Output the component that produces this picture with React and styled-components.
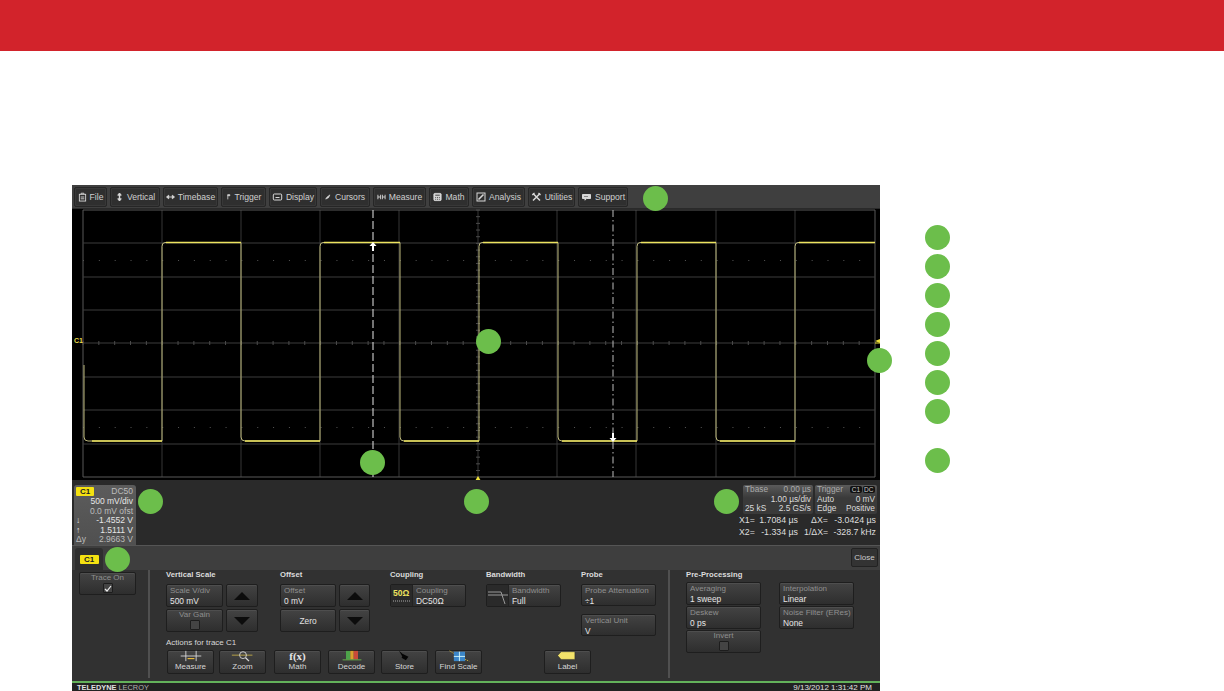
import React from "react";
import styled, { createGlobalStyle, css } from "styled-components";

const Global = createGlobalStyle`
  html, body { margin: 0; padding: 0; background: #fff; overflow: hidden; }
  * { box-sizing: border-box; }
`;
const Page = styled.div`width: 1224px; height: 691px; overflow: hidden; font-family: "Liberation Sans", Arial, sans-serif;`;
const Banner = styled.header`height: 51px; background: #d2232b;`;
const Main = styled.main`display: flex; padding: 134px 0 0 72px; height: 640px;`;
const Panel = styled.section`position: relative; width: 808px; height: 506px; background: #2c2c2c; display: flex; flex-direction: column; flex: none;`;
const Toolbar = styled.nav`height: 24px; flex: none; background: #3f3f3f; display: flex; gap: 3px; padding: 2px 0 0 2px; border-bottom: 1px solid #2a2a2a;`;
const ToolBtn = styled.div`
  width: ${p => p.$w}px; height: 20px; display: flex; align-items: center; justify-content: center; gap: 3px;
  background: #2f2f2f; border: 1px solid #262626; border-radius: 2px; color: #cfcfcf; font-size: 8.6px; white-space: nowrap;
  box-shadow: inset 0 0 0 1px #383838;
`;
const Plot = styled.svg`display: block; width: 808px; height: 271px; flex: none; background: #000;`;
const InfoStrip = styled.div`height: 65px; flex: none; background: #2a2a2a; display: flex; justify-content: space-between; padding: 5px 3px 0 2px;`;
const TraceBox = styled.div`width: 62px; height: 60px; background: linear-gradient(#5c5c5c, #505050); border-radius: 3px 3px 0 0; padding: 2px 3px 0 2px; color: #e6e6e6; font-size: 8.5px; line-height: 9.6px;`;
const TraceRow = styled.div`display: flex; justify-content: space-between; white-space: nowrap; color: ${p => p.$dim ? "#bcbcbc" : "#e6e6e6"}; height: ${p => p.$h || 9.6}px;`;
const Tag = styled.span`display: inline-block; width: ${p => p.$w || 18}px; height: ${p => p.$h || 9}px; line-height: ${p => p.$h || 9}px; background: #f5e211; color: #222; font-size: 8px; font-weight: 700; text-align: center; border-radius: 1px;`;
const Readouts = styled.div`width: 134px; display: flex; flex-direction: column;`;
const ReadoutBoxes = styled.div`display: flex; gap: 2px; height: 29px;`;
const ReadoutBox = styled.div`width: ${p => p.$w}px; background: linear-gradient(#5a5a5a, #3a3a3a 45%, #3a3a3a); border-radius: 2px; padding: 0 2px; color: #d8d8d8; font-size: 8.3px; line-height: 9.6px;`;
const ReadoutRow = styled.div`display: flex; justify-content: space-between; white-space: nowrap; color: ${p => p.$dim ? "#a9a9a9" : "#dcdcdc"};`;
const Pill = styled.span`background: #111; color: #ccc; font-size: 6.5px; padding: 0 1.5px; border-radius: 2px; margin-left: 1px;`;
const Measures = styled.div`display: grid; grid-template-columns: 14px 45px 6px 24px 48px; margin-left: -4px; padding-top: 1px; color: #dedede; font-size: 8.8px; line-height: 11.5px; white-space: nowrap; width: 137px;`;
const Num = styled.span`text-align: right;`;
const TabStrip = styled.div`height: 25px; flex: none; background: #3e3e3e; border-top: 1px solid #555; display: flex; justify-content: space-between; align-items: flex-start; padding: 2px 2px 0 3px;`;
const Tab = styled.div`width: 28px; height: 22px; background: #2f2f2f; border-radius: 3px 3px 0 0; display: flex; justify-content: center; padding-top: 7px;`;
const CloseBtn = styled.div`width: 27px; height: 19px; background: #333; border: 1px solid #222; border-radius: 2px; color: #ccc; font-size: 8px; line-height: 17px; text-align: center;`;
const Dialog = styled.div`height: 111px; flex: none; background: #313131; display: flex; padding: 0 0 0 7px; color: #e4e4e4; font-size: 8px;`;
const SideCol = styled.div`width: 69px; flex: none; padding-top: 2px;`;
const TraceOnWrap = styled.div`width: 57px;`;
const Separator = styled.div`width: 2px; height: 108px; background: #505050; flex: none;`;
const CenterCol = styled.div`width: 518px; flex: none; padding: 0 0 0 16px; display: flex; flex-direction: column;`;
const GroupRow = styled.div`display: flex; height: 66px;`;
const Group = styled.div`width: ${p => p.$w}px; margin-right: ${p => p.$gap || 0}px; flex: none; display: flex; flex-direction: column;`;
const GroupTitle = styled.div`font-size: 7.7px; font-weight: 700; color: #dcdcdc; height: 10px; line-height: 10px; margin-bottom: ${p => p.$mb ?? 4}px; white-space: nowrap;`;
const BtnGrid = styled.div`display: grid; grid-template-columns: ${p => p.$cols}; grid-auto-rows: 23px; gap: ${p => p.$gap || "2px 3px"};`;
const btnBase = css`
  background: linear-gradient(#434343, #2e2e2e); border: 1px solid #1e1e1e; border-radius: 2px; box-shadow: inset 0 1px 0 #4e4e4e;
`;
const ValueBtn = styled.div`${btnBase}; height: ${p => p.$h || 23}px; padding: 1px 3px; display: flex; flex-direction: column; white-space: nowrap; overflow: hidden; margin-bottom: ${p => p.$mb || 0}px;`;
const BtnLabel = styled.span`color: #8f8f8f; font-size: 8px; line-height: 10px;`;
const BtnValue = styled.span`color: #e6e6e6; font-size: 8.4px; line-height: 10px;`;
const CheckBtn = styled.div`${btnBase}; height: ${p => p.$h || 23}px; display: flex; flex-direction: column; align-items: center; color: #8f8f8f; font-size: 8px; line-height: 10px;`;
const Box = styled.div`width: 10px; height: 10px; border: 1px solid #1d1d1d; background: #444; border-radius: 1px; display: flex; align-items: center; justify-content: center;`;
const ArrowBtn = styled.div`${btnBase}; display: flex; align-items: center; justify-content: center;`;
const Arrow = styled.div`width: 0; height: 0; border-left: 8px solid transparent; border-right: 8px solid transparent; ${p => p.$down ? "border-top: 8px solid #0c0c0c;" : "border-bottom: 8px solid #0c0c0c;"}`;
const PlainBtn = styled.div`${btnBase}; display: flex; align-items: center; justify-content: center; color: #e0e0e0; font-size: 8.4px;`;
const IconValueBtn = styled.div`${btnBase}; height: 23px; display: flex; align-items: stretch;`;
const IconCell = styled.div`width: 22px; flex: none; border-right: 1px solid #222; background: #2a2a2a; display: flex; align-items: center; justify-content: center;`;
const IconText = styled.div`padding: 1px 3px 0 3px; display: flex; flex-direction: column; white-space: nowrap;`;
const ActionsTitle = styled.div`font-size: 8px; color: #d8d8d8; height: 12px; line-height: 12px; margin-top: 1px; margin-bottom: 1px;`;
const ActionRow = styled.div`display: flex;`;
const ActionBtn = styled.div`
  ${btnBase}; width: 47px; height: 24px; margin-left: ${p => p.$ml || 0}px; flex: none; display: flex; flex-direction: column; align-items: center; justify-content: flex-end;
  color: #d6d6d6; font-size: 8px; line-height: 10px; white-space: nowrap; padding-bottom: 1px;
`;
const ActionIcon = styled.svg`display: block; width: 30px; height: 12px; flex: none;`;
const PreCol = styled.div`padding: 0 0 0 16px;`;
const PreGrid = styled.div`display: grid; grid-template-columns: 75px 75px; column-gap: 18px; row-gap: 1px; grid-auto-rows: 23px;`;
const Footer = styled.footer`height: 10px; flex: none; border-top: 2px solid #63b15a; background: #222; display: flex; justify-content: space-between; padding: 0 8px 0 5px; color: #e0e0e0; font-size: 8px; line-height: 9px; white-space: nowrap;`;
const Brand = styled.span`font-size: 7.4px; b { font-weight: 700; } span { color: #b0b0b0; }`;
const Callout = styled.div`position: absolute; left: ${p => p.$x - 72 - 12.5}px; top: ${p => p.$y - 185 - 12.5}px; width: 25px; height: 25px; border-radius: 50%; background: #6cbe4b;`;
const Legend = styled.ul`list-style: none; margin: 40px 0 0 45px; padding: 0; display: flex; flex-direction: column; gap: 4px;`;
const LegendDot = styled.li`width: 25px; height: 25px; border-radius: 50%; background: #6cbe4b; margin-top: ${p => p.$mt || 0}px;`;

const Ic = ({ children, w = 9 }) => <svg width={w} height="10" viewBox="0 0 10 10" fill="none" stroke="#d8d8d8" strokeWidth="1">{children}</svg>;
const toolItems = [
  ["File", 33, <Ic><rect x="1.5" y="2" width="7" height="7.5" /><path d="M3.5 2V.8h3V2M3 5h4M3 7h4" /></Ic>],
  ["Vertical", 50, <Ic><path d="M5 1v8" strokeWidth="1.6" /><path d="M3 3l2-2.4L7 3zM3 7l2 2.4L7 7z" fill="#d8d8d8" /></Ic>],
  ["Timebase", 55, <Ic><path d="M1 5h8" /><path d="M3 3L.6 5 3 7zM7 3l2.4 2L7 7z" fill="#d8d8d8" /></Ic>],
  ["Trigger", 45, <Ic w={6}><path d="M3 1v8" strokeWidth="1.3" /><path d="M3 1h3.5v2H3z" fill="#d8d8d8" /></Ic>],
  ["Display", 48, <Ic w={11}><rect x=".8" y="2" width="8.4" height="6" rx="1" /><path d="M3 5.5h4" /></Ic>],
  ["Cursors", 50, <Ic w={7}><path d="M1 8l2-3 4-3-2 4z" fill="#d8d8d8" /></Ic>],
  ["Measure", 53, <Ic><path d="M1 2.5v5M4 2.5v5M6 2.5v5M9 2.5v5M1 5h3M6 5h3" /></Ic>],
  ["Math", 40, <Ic><rect x="1" y="1" width="8" height="8" rx="1" fill="#d8d8d8" /><path d="M2.5 3h5" stroke="#333" /><path d="M2.5 5.5h5M2.5 7.5h5" stroke="#333" strokeDasharray="1 1" /></Ic>],
  ["Analysis", 53, <Ic w={10}><rect x="1" y="1" width="8" height="8" /><path d="M2.5 7.5L7.5 2.5" strokeWidth="1.6" /></Ic>],
  ["Utilities", 47, <Ic w={11}><path d="M1.5 1.5l7 7M8.5 1.5l-7 7" strokeWidth="1.5" /><path d="M.8 3L3 .8M7 1l2 2" strokeWidth="1.2" /></Ic>],
  ["Support", 50, <Ic w={11}><path d="M1 2.5h8v4H5L3.5 8.2V6.5H1z" fill="#d8d8d8" /><path d="M3 4.5h4" stroke="#333" strokeDasharray="1 1" /></Ic>],
];

const vLines = [83, 162, 241, 320, 399, 478, 557, 636, 716, 795, 875];
const hLines = [210, 243, 277, 310, 343, 377, 410, 444, 477];
const edges = [162, 241, 320, 400, 479, 558, 637, 716, 795];
const HI = 242.5, LO = 441;
function tracePath() {
  let d = `M84 365V${LO - 4}Q84 ${LO} 88 ${LO}`;
  edges.forEach((x, i) => {
    if (i % 2 === 0) d += `H${x}V${HI + 4}Q${x} ${HI} ${x + 3} ${HI}`;
    else d += `H${x}V${LO - 4}Q${x} ${LO} ${x + 4} ${LO}`;
  });
  return d + `H875`;
}
const range = (a, b, s) => { const r = []; for (let v = a; v <= b; v += s) r.push(v); return r; };

function Scope() {
  const step = 15.84;
  const dotsX = range(83, 875, step);
  return (
    <Plot viewBox="72 209 808 271">
      {vLines.map(x => <line key={x} x1={x} x2={x} y1="210" y2="477" stroke={x === 83 || x === 875 ? "#585858" : "#363636"} />)}
      {hLines.map(y => <line key={y} x1="83" x2="875" y1={y} y2={y} stroke={y === 210 || y === 477 ? "#585858" : "#3c3c3c"} />)}
      {dotsX.map(x => <g key={x}>
        <line x1={x} x2={x} y1="341" y2="345" stroke="#4c4c4c" />
        <rect x={x} y="260" width="1" height="1" fill="#555" />
        <rect x={x} y="427" width="1" height="1" fill="#555" />
      </g>)}
      {range(210, 477, 6.68).map(y => <line key={y} x1="476" x2="480" y1={y} y2={y} stroke="#4c4c4c" />)}
      <path d={tracePath()} fill="none" stroke="#bdb97c" strokeWidth="1" />
      {[[162, 241, HI], [320, 400, HI], [479, 558, HI], [637, 716, HI], [795, 875, HI], [88, 162, LO], [241, 320, LO], [400, 479, LO], [558, 637, LO], [716, 795, LO]].map(([a, b, y]) =>
        <line key={a} x1={a + 4} x2={b} y1={y} y2={y} stroke="#ece35f" strokeWidth="1.5" />)}
      <line x1="373" x2="373" y1="210" y2="477" stroke="#e8e8e8" strokeDasharray="8 3" />
      <line x1="613" x2="613" y1="210" y2="477" stroke="#bcbcbc" strokeDasharray="7 3 1.5 3" />
      <path d="M373 242l-3.5 4h2.5v5h2v-5h2.5z" fill="#fff" />
      <path d="M613 442l-3.5-4h2.5v-5h2v5h2.5z" fill="#fff" />
      <path d="M475 481h6l-3-5zM880 343v-4l-5 2z" fill="#f0e23a" />
      <path d="M875 343h5" stroke="#f0e23a" />
      <text x="74" y="343" fill="#e8dd4c" fontSize="7" fontWeight="700" fontFamily="Liberation Sans">C1</text>
    </Plot>
  );
}

const icons = {
  Measure: <><path d="M3 7h24" stroke="#ddd" /><path d="M9 1v12M21 1v12" stroke="#ddd" /><path d="M11 10h8" stroke="#e7b93a" strokeWidth="1.4" /></>,
  Zoom: <><path d="M2 6h24" stroke="#c8b24a" /><circle cx="15" cy="6" r="4" stroke="#ddd" fill="none" /><path d="M18 9l4 4" stroke="#ddd" strokeWidth="1.4" /></>,
  Decode: <><rect x="8" y="1" width="5" height="10" fill="#4da34a" /><rect x="13" y="1" width="4" height="10" fill="#d9a22e" /><rect x="17" y="1" width="5" height="10" fill="#c94a3a" /><path d="M4 11.5h22" stroke="#6cbe4b" /></>,
  Store: <><path d="M8 1l6 5-2 2z" fill="#050505" /><path d="M13 5l6 3-3 4-5-3z" fill="#050505" /></>,
  "Find Scale": <><rect x="9" y="2" width="13" height="11" fill="#3b86c8" /><path d="M15.5 2v11M9 7.5h13" stroke="#dff" /><path d="M4 1l5 3M22 11l5 2" stroke="#e2c23a" strokeDasharray="1.5 1" /></>,
  Label: <path d="M7 2h16v9H7L3 6.5z" fill="#f3e36a" stroke="#222" strokeWidth=".5" />,
};
const MathLabel = styled.div`font-family: "Liberation Serif", serif; font-size: 11px; line-height: 12px; color: #e6e6e6; font-weight: 700;`;

function Action({ name, ml }) {
  return (
    <ActionBtn $ml={ml}>
      <ActionIcon viewBox="0 0 30 14">{icons[name]}</ActionIcon>
      {name}
    </ActionBtn>
  );
}

const Val = ({ label, value, h, mb }) => <ValueBtn $h={h} $mb={mb}><BtnLabel>{label}</BtnLabel><BtnValue>{value}</BtnValue></ValueBtn>;
const Check = ({ label, h, on }) => (
  <CheckBtn $h={h}>{label}
    <Box>{on && <svg width="8" height="7" viewBox="0 0 8 7"><path d="M1 4l2 2 4-5" stroke="#eee" fill="none" strokeWidth="1.2" /></svg>}</Box>
  </CheckBtn>
);

export default function App() {
  return (
    <Page>
      <Global />
      <Banner />
      <Main>
        <Panel>
          <Toolbar>
            {toolItems.map(([label, w, icon]) => <ToolBtn key={label} $w={w}>{icon}{label}</ToolBtn>)}
          </Toolbar>
          <Scope />
          <InfoStrip>
            <TraceBox>
              <TraceRow $dim $h={10}><Tag>C1</Tag><span>DC50</span></TraceRow>
              <TraceRow><span /><span>500 mV/div</span></TraceRow>
              <TraceRow $dim><span /><span>0.0 mV ofst</span></TraceRow>
              <TraceRow><span>↓</span><span>-1.4552 V</span></TraceRow>
              <TraceRow><span>↑</span><span>1.5111 V</span></TraceRow>
              <TraceRow $dim><span>Δy</span><span>2.9663 V</span></TraceRow>
            </TraceBox>
            <Readouts>
              <ReadoutBoxes>
                <ReadoutBox $w={70}>
                  <ReadoutRow $dim><span>Tbase</span><span>0.00 µs</span></ReadoutRow>
                  <ReadoutRow><span /><span>1.00 µs/div</span></ReadoutRow>
                  <ReadoutRow><span>25 kS</span><span>2.5 GS/s</span></ReadoutRow>
                </ReadoutBox>
                <ReadoutBox $w={62}>
                  <ReadoutRow $dim><span>Trigger</span><span><Pill>C1</Pill><Pill>DC</Pill></span></ReadoutRow>
                  <ReadoutRow><span>Auto</span><span>0 mV</span></ReadoutRow>
                  <ReadoutRow><span>Edge</span><span>Positive</span></ReadoutRow>
                </ReadoutBox>
              </ReadoutBoxes>
              <Measures>
                <span>X1=</span><Num>1.7084 µs</Num><span /><Num>ΔX=</Num><Num>-3.0424 µs</Num>
                <span>X2=</span><Num>-1.334 µs</Num><span /><Num>1/ΔX=</Num><Num>-328.7 kHz</Num>
              </Measures>
            </Readouts>
          </InfoStrip>
          <TabStrip>
            <Tab><Tag $w={19}>C1</Tag></Tab>
            <CloseBtn>Close</CloseBtn>
          </TabStrip>
          <Dialog>
            <SideCol><TraceOnWrap><Check label="Trace On" h={23} on /></TraceOnWrap></SideCol>
            <Separator />
            <CenterCol>
              <GroupRow>
                <Group $w={92} $gap={22}>
                  <GroupTitle>Vertical Scale</GroupTitle>
                  <BtnGrid $cols="57px 32px">
                    <Val label="Scale V/div" value="500 mV" />
                    <ArrowBtn><Arrow /></ArrowBtn>
                    <Check label="Var Gain" />
                    <ArrowBtn><Arrow $down /></ArrowBtn>
                  </BtnGrid>
                </Group>
                <Group $w={89} $gap={21}>
                  <GroupTitle>Offset</GroupTitle>
                  <BtnGrid $cols="56px 31px">
                    <Val label="Offset" value="0 mV" />
                    <ArrowBtn><Arrow /></ArrowBtn>
                    <PlainBtn>Zero</PlainBtn>
                    <ArrowBtn><Arrow $down /></ArrowBtn>
                  </BtnGrid>
                </Group>
                <Group $w={76} $gap={20}>
                  <GroupTitle>Coupling</GroupTitle>
                  <IconValueBtn>
                    <IconCell>
                      <svg width="20" height="20" viewBox="0 0 20 20">
                        <text x="1" y="10" fill="#ece35f" fontSize="8.5" fontWeight="700" fontFamily="Liberation Sans">50Ω</text>
                        <path d="M1 15h18" stroke="#aaa" strokeDasharray="1 1" />
                      </svg>
                    </IconCell>
                    <IconText><BtnLabel>Coupling</BtnLabel><BtnValue>DC50Ω</BtnValue></IconText>
                  </IconValueBtn>
                </Group>
                <Group $w={75} $gap={20}>
                  <GroupTitle>Bandwidth</GroupTitle>
                  <IconValueBtn>
                    <IconCell>
                      <svg width="20" height="20" viewBox="0 0 20 20"><path d="M0 6h13l4 12M0 9h20" stroke="#999" fill="none" /></svg>
                    </IconCell>
                    <IconText><BtnLabel>Bandwidth</BtnLabel><BtnValue>Full</BtnValue></IconText>
                  </IconValueBtn>
                </Group>
                <Group $w={75}>
                  <GroupTitle>Probe</GroupTitle>
                  <Val label="Probe Attenuation" value="÷1" h={22} mb={8} />
                  <Val label="Vertical Unit" value="V" h={22} />
                </Group>
              </GroupRow>
              <ActionsTitle>Actions for trace C1</ActionsTitle>
              <ActionRow>
                <Action name="Measure" ml={1} />
                <Action name="Zoom" ml={5} />
                <ActionBtn $ml={8}><MathLabel>f(x)</MathLabel>Math</ActionBtn>
                <Action name="Decode" ml={7} />
                <Action name="Store" ml={6} />
                <Action name="Find Scale" ml={7} />
                <Action name="Label" ml={62} />
              </ActionRow>
            </CenterCol>
            <Separator />
            <PreCol>
              <GroupTitle $mb={2}>Pre-Processing</GroupTitle>
              <PreGrid>
                <Val label="Averaging" value="1 sweep" />
                <Val label="Interpolation" value="Linear" />
                <Val label="Deskew" value="0 ps" />
                <Val label="Noise Filter (ERes)" value="None" />
                <Check label="Invert" />
              </PreGrid>
            </PreCol>
          </Dialog>
          <Footer>
            <Brand><b>TELEDYNE</b> <span>LECROY</span></Brand>
            <span>9/13/2012 1:31:42 PM</span>
          </Footer>
          {[[655, 198], [488, 341], [879, 360], [372, 462], [150, 501], [476, 501], [726, 501], [117, 559]].map(([x, y]) =>
            <Callout key={`${x}-${y}`} $x={x} $y={y} />)}
        </Panel>
        <Legend>
          {[0, 0, 0, 0, 0, 0, 0, 20].map((mt, i) => <LegendDot key={i} $mt={mt} />)}
        </Legend>
      </Main>
    </Page>
  );
}
